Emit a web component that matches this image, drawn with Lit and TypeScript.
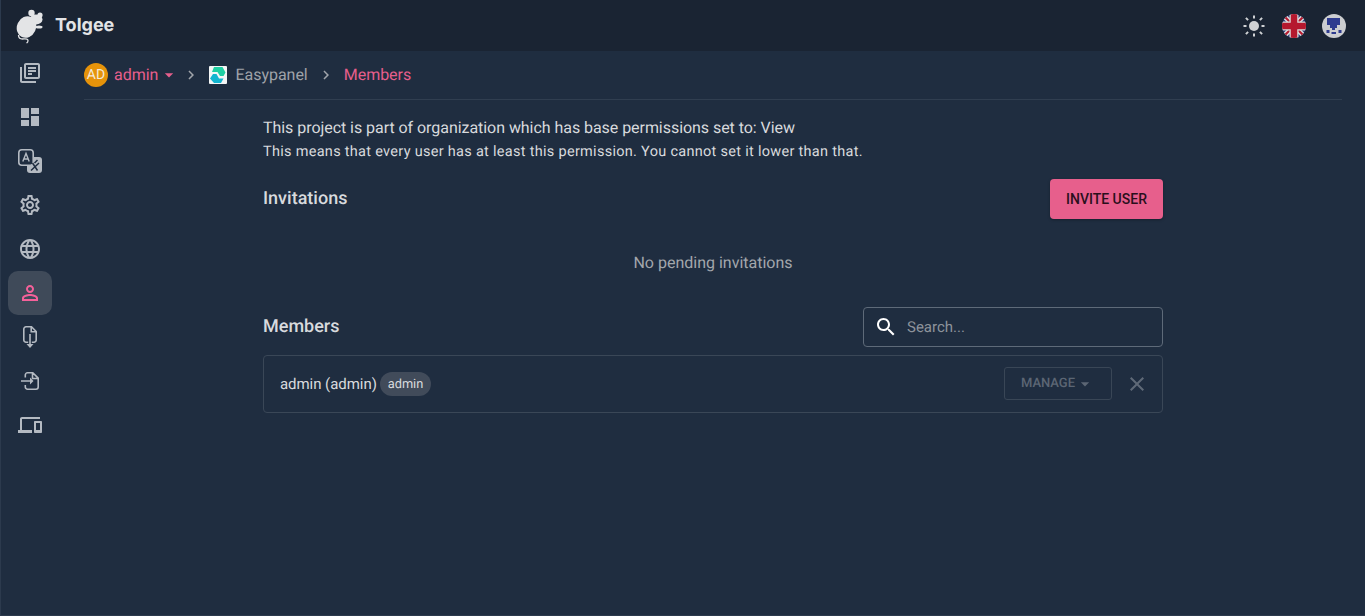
import { LitElement, html, css, svg } from 'lit';
import { customElement } from 'lit/decorators.js';

const navIcons = [
  svg`<path d="M4 6H2v14c0 1.100.9 2 2 2h14v-2H4V6zm16-4H8c-1.100 0-2 .9-2 2v12c0 1.100.9 2 2 2h12c1.100 0 2-.9 2-2V4c0-1.100-.9-2-2-2zm0 14H8V4h12v12zM10 9h8v2h-8zm0 3h4v2h-4zm0-6h8v2h-8z"/>`,
  svg`<path d="M3 13h8V3H3v10zm0 8h8v-6H3v6zm10 0h8V11h-8v10zm0-18v6h8V3h-8z"/>`,
  svg`<rect x="9" y="8" width="15" height="16" rx="3"/>
    <rect x=".8" y=".8" width="14.400" height="15.400" rx="3" fill="#1f2d40" stroke="currentColor" stroke-width="1.600"/>
    <path d="M4.800 12.500 8 4.500l3.200 8M5.900 10h4.200" fill="none" stroke="currentColor" stroke-width="1.400"/>
    <path d="M13 21.500l8-7.500M14.500 14l5 7.500M16.500 14l3-3" fill="none" stroke="#1f2d40" stroke-width="1.500"/>`,
  svg`<path d="M19.430 12.980c.04-.32.07-.64.07-.98 0-.34-.03-.66-.07-.98l2.110-1.650c.19-.15.24-.42.12-.64l-2-3.460c-.09-.16-.26-.25-.44-.25-.06 0-.12.01-.17.03l-2.490 1c-.52-.4-1.080-.73-1.690-.98l-.38-2.650C14.460 2.180 14.250 2 14 2h-4c-.25 0-.46.18-.49.420l-.38 2.650c-.61.25-1.170.59-1.690.98l-2.490-1c-.06-.02-.12-.03-.18-.03-.17 0-.34.09-.43.25l-2 3.460c-.13.220-.07.490.12.640l2.110 1.650c-.04.320-.07.650-.07.980 0 .330.030.660.070.980l-2.110 1.650c-.19.150-.24.42-.12.640l2 3.460c.09.160.26.250.44.250.060 0 .12-.01.17-.03l2.490-1c.52.400 1.080.730 1.690.980l.38 2.650c.03.240.24.420.49.420h4c.25 0 .46-.18.49-.42l.38-2.650c.61-.25 1.170-.59 1.690-.98l2.490 1c.06.020.12.030.18.030.17 0 .34-.09.43-.25l2-3.460c.12-.22.070-.49-.12-.64l-2.110-1.650zm-1.980-1.710c.04.310.050.520.050.730 0 .210-.02.430-.05.730l-.14 1.130.89.700 1.080.840-.7 1.210-1.270-.51-1.040-.42-.9.680c-.43.320-.84.560-1.250.730l-1.060.430-.16 1.130-.2 1.350h-1.400l-.19-1.350-.16-1.130-1.060-.43c-.43-.18-.83-.41-1.230-.71l-.91-.7-1.060.430-1.270.510-.7-1.210 1.080-.840.890-.7-.14-1.130c-.03-.31-.05-.54-.05-.74s.020-.43.050-.73l.14-1.130-.89-.7-1.080-.840.7-1.210 1.270.510 1.040.420.9-.68c.43-.32.840-.56 1.250-.73l1.060-.43.16-1.130.2-1.350h1.390l.19 1.350.16 1.130 1.060.43c.43.180.83.410 1.230.71l.91.7 1.060-.43 1.270-.51.7 1.210-1.070.850-.89.7.140 1.130zM12 8c-2.210 0-4 1.790-4 4s1.790 4 4 4 4-1.790 4-4-1.790-4-4-4zm0 6c-1.100 0-2-.9-2-2s.9-2 2-2 2 .9 2 2-.9 2-2 2z"/>`,
  svg`<path d="M11.990 2C6.470 2 2 6.480 2 12s4.470 10 9.990 10C17.520 22 22 17.520 22 12S17.520 2 11.990 2zm6.930 6h-2.950c-.32-1.250-.78-2.450-1.380-3.560 1.840.630 3.370 1.910 4.330 3.560zM12 4.040c.83 1.200 1.480 2.530 1.910 3.960h-3.820c.43-1.430 1.080-2.760 1.910-3.960zM4.260 14C4.100 13.360 4 12.690 4 12s.1-1.360.26-2h3.380c-.08.660-.14 1.320-.14 2s.06 1.340.14 2H4.260zm.82 2h2.950c.32 1.250.78 2.450 1.380 3.560-1.840-.63-3.370-1.900-4.330-3.560zm2.950-8H5.080c.96-1.660 2.490-2.930 4.330-3.560C8.810 5.550 8.350 6.750 8.030 8zM12 19.960c-.83-1.200-1.480-2.530-1.910-3.960h3.820c-.43 1.430-1.080 2.760-1.910 3.960zM14.340 14H9.660c-.09-.66-.16-1.320-.16-2s.07-1.350.16-2h4.680c.09.650.16 1.320.16 2s-.07 1.340-.16 2zm.25 5.560c.6-1.110 1.060-2.310 1.380-3.560h2.950c-.96 1.650-2.490 2.930-4.330 3.560zM16.360 14c.08-.66.14-1.320.14-2s-.06-1.340-.14-2h3.380c.16.640.26 1.310.26 2s-.1 1.360-.26 2h-3.380z"/>`,
  svg`<path d="M12 6c1.100 0 2 .9 2 2s-.9 2-2 2-2-.9-2-2 .9-2 2-2m0 9c2.700 0 5.800 1.290 6 2.010V18H6v-.99C6.200 16.290 9.300 15 12 15m0-11C9.790 4 8 5.790 8 8s1.790 4 4 4 4-1.790 4-4-1.790-4-4-4zm0 9c-2.670 0-8 1.340-8 4v3h16v-3c0-2.660-5.330-4-8-4z"/>`,
  svg`<path d="M10.200 17.200H8a2.200 2.200 0 0 1-2.200-2.200V4A2.200 2.200 0 0 1 8 1.800h5.500l4.700 4.700V15a2.200 2.200 0 0 1-2.200 2.200h-2.200M13.200 2v4.800h4.800" fill="none" stroke="currentColor" stroke-width="1.600"/>
    <path d="M11.200 9h1.600v10h2.700L12 23l-3.500-4h2.700z"/>`,
  svg`<path d="M7.300 8.500V6A2.200 2.200 0 0 1 9.500 3.800h5.300l5.400 5.400V18a2.200 2.200 0 0 1-2.200 2.200H9.500A2.200 2.200 0 0 1 7.300 18v-2M14.500 4v5.500h5.500" fill="none" stroke="currentColor" stroke-width="1.600"/>
    <path d="M3 11.300h9v-2.800l3.500 3.500-3.500 3.500v-2.800H3z"/>`,
  svg`<path d="M4 6h18V4H4c-1.100 0-2 .9-2 2v11H0v3h14v-3H4V6zm19 2h-6c-.55 0-1 .45-1 1v10c0 .55.450 1 1 1h6c.55 0 1-.45 1-1V9c0-.55-.45-1-1-1zm-1 9h-4v-7h4v7z"/>`,
];

@customElement('app-root')
export class AppRoot extends LitElement {
  static styles = css`
    :host {
      display: block;
      height: 616px;
      box-sizing: border-box;
      overflow: hidden;
      background: #1f2d40;
      color: #d8dadd;
      font-family: Roboto, 'Liberation Sans', sans-serif;
      font-size: 16px;
      text-rendering: geometricPrecision;
      border-left: 1px solid #2c3a4d;
      border-bottom: 1px solid #2c3a4d;
    }

    .topbar {
      height: 51px;
      background: #1a2433;
      display: flex;
      align-items: center;
      padding: 0 19px 0 15px;
    }

    .logo {
      display: flex;
      align-items: center;
      gap: 8px;
      color: #e3e4e6;
    }

    .logo svg { display: block; }

    .logo-name {
      font-family: Inter, sans-serif;
      font-size: 18px;
      font-weight: 700;
    }

    .top-actions {
      margin-left: auto;
      display: flex;
      align-items: center;
      gap: 16px;
    }

    .top-actions svg { display: block; }

    .body {
      display: flex;
    }

    .sidebar {
      width: 59px;
      box-sizing: border-box;
      flex: none;
      display: flex;
      flex-direction: column;
      padding: 0 0 0 7px;
    }

    .nav-item {
      width: 44px;
      height: 44px;
      display: flex;
      align-items: center;
      justify-content: center;
      border-radius: 10px;
      fill: #b4bac2;
      color: #b4bac2;
    }

    .nav-item.active {
      background: #3f4a59;
      fill: #f5619a;
      color: #f5619a;
    }

    .nav-item svg { display: block; }

    .main {
      flex: 1;
      padding: 0 23px 0 24px;
      min-width: 0;
    }

    .crumbs {
      height: 48px;
      display: flex;
      align-items: center;
      border-bottom: 1px solid #303e50;
      color: #9fa3a9;
    }

    .crumb-text {
      padding-bottom: 2px;
      letter-spacing: -0.02px;
    }

    .avatar {
      width: 24px;
      height: 24px;
      border-radius: 50%;
      background: #e6930a;
      color: #f3ead9;
      font-size: 14px;
      display: flex;
      align-items: center;
      justify-content: center;
      margin-right: 6px;
    }

    .link { color: #e75f8c; }

    .caret {
      fill: #e75f8c;
      display: block;
      margin-left: 1px;
    }

    .sep {
      fill: #a0a4aa;
      display: block;
      margin: 0 9px;
    }

    .sep.first { margin-left: 3px; }

    .project-logo { display: block; margin-right: 8px; }

    .content {
      width: 900px;
      margin: 0 auto;
    }

    .note-1 {
      margin-top: 18px;
      line-height: 19px;
      letter-spacing: -0.05px;
    }

    .note-2 {
      margin-top: 6px;
      font-size: 14.500px;
      line-height: 17px;
      letter-spacing: 0.29px;
    }

    .section-head {
      display: flex;
      align-items: center;
      justify-content: space-between;
    }

    .section-head h2 {
      margin: 0;
      padding-bottom: 2px;
      font-size: 18px;
      font-weight: 500;
      color: #d8dadd;
    }

    .invites { margin-top: 19px; height: 40px; }

    .invite-btn {
      width: 113px;
      height: 40px;
      background: #e75f8c;
      color: #2a0f1c;
      border: 0;
      border-radius: 4px;
      font: 500 14px Roboto, sans-serif;
      padding: 0;
      box-shadow: 0 1px 3px rgba(0, 0, 0, 0.3);
    }

    .empty {
      margin-top: 32px;
      text-align: center;
      color: #a3a7ac;
      line-height: 24px;
    }

    .members-head { margin-top: 32px; height: 40px; }

    .search {
      width: 300px;
      height: 40px;
      box-sizing: border-box;
      border: 1px solid #5e6a79;
      border-radius: 4px;
      display: flex;
      align-items: center;
      padding-left: 10px;
      gap: 9px;
      color: #8d939b;
      font-size: 15px;
    }

    .search svg { fill: #fff; display: block; }

    .row {
      margin-top: 8px;
      height: 58px;
      box-sizing: border-box;
      border: 1px solid #3a4757;
      border-radius: 4px;
      display: flex;
      align-items: center;
      padding: 0 13px 0 16px;
      font-size: 15px;
      letter-spacing: -0.05px;
    }

    .row-name { padding-bottom: 1px; }

    .chip {
      margin-left: 3px;
      height: 24px;
      padding: 0 8px;
      border-radius: 12px;
      background: #414b5a;
      font-size: 12.800px;
      display: flex;
      align-items: center;
    }

    .manage {
      margin-left: auto;
      margin-top: -1px;
      width: 108px;
      height: 33px;
      box-sizing: border-box;
      border: 1px solid #394656;
      border-radius: 3px;
      display: flex;
      align-items: center;
      justify-content: center;
      color: #5c6674;
      font-size: 13px;
      font-weight: 500;
    }

    .manage svg { fill: #5c6674; display: block; }

    .remove {
      display: block;
      margin-left: 13px;
      fill: #5f6977;
    }
  `;

  render() {
    return html`
      <div class="topbar">
        <div class="logo">
          <svg width="31" height="38" viewBox="16 6 31 38" fill="currentColor">
            <ellipse cx="26.500" cy="26" rx="9.500" ry="11" transform="rotate(25 26.500 26)"/>
            <ellipse cx="36" cy="18.500" rx="6.500" ry="5"/>
            <circle cx="31.500" cy="12" r="3.200"/>
            <circle cx="40" cy="14" r="2.600"/>
            <ellipse cx="39" cy="26" rx="3.500" ry="1.500"/>
            <path d="M18.500 34c0 3 1 4 4 4s5.500-.5 5.500 1.500-.5 2-1.500 2.500" fill="none" stroke="currentColor" stroke-width="1.300"/>
          </svg>
          <span class="logo-name">Tolgee</span>
        </div>
        <div class="top-actions">
          <svg width="24" height="24" viewBox="0 0 24 24" fill="#d0d2d5">
            <circle cx="12" cy="12" r="5"/>
            <path d="M11 1.500h2v3h-2zM11 19.500h2v3h-2zM1.500 11h3v2h-3zM19.500 11h3v2h-3zM4.600 3.200l2.200 2.200-1.400 1.400-2.200-2.200zM18.600 17.200l2.200 2.200-1.400 1.400-2.200-2.200zM19.400 3.200l1.400 1.400-2.200 2.200-1.400-1.400zM5.400 17.200l1.400 1.400-2.200 2.200-1.400-1.400z"/>
          </svg>
          <svg width="24" height="24" viewBox="0 0 24 24">
            <defs><clipPath id="flag"><circle cx="12" cy="12" r="12"/></clipPath></defs>
            <g clip-path="url(#flag)">
              <rect width="24" height="24" fill="#2b3a78"/>
              <path d="M0 0L24 24M24 0L0 24" stroke="#dcdcdc" stroke-width="5"/>
              <path d="M0 0L24 24M24 0L0 24" stroke="#b5182e" stroke-width="2"/>
              <path d="M12 0V24M0 12H24" stroke="#dcdcdc" stroke-width="9"/>
              <path d="M12 0V24M0 12H24" stroke="#b5182e" stroke-width="6.500"/>
            </g>
          </svg>
          <svg width="24" height="24" viewBox="0 0 24 24">
            <circle cx="12" cy="12" r="12" fill="#cccdd0"/>
            <path d="M5 4h13v7h-3v3h-2v2h-3v-2H8v-3H5z" fill="#2e3b8f"/>
            <path d="M4.500 16h3v3h-3zM16.500 16h3v3h-3zM9.500 18h4.500v2H9.500z" fill="#2e3b8f"/>
          </svg>
        </div>
      </div>
      <div class="body">
        <nav class="sidebar">
          ${navIcons.map(
            (icon, i) => html`
              <div class="nav-item ${i === 5 ? 'active' : ''}">
                <svg width="24" height="24" viewBox="0 0 24 24">${icon}</svg>
              </div>
            `,
          )}
        </nav>
        <div class="main">
          <div class="crumbs">
            <div class="avatar">AD</div>
            <span class="crumb-text link">admin</span>
            <svg class="caret" width="20" height="20" viewBox="0 0 24 24"><path d="M7 10l5 5 5-5z"/></svg>
            <svg class="sep first" width="18" height="18" viewBox="0 0 24 24"><path d="M10 6L8.590 7.410 13.170 12l-4.580 4.590L10 18l6-6z"/></svg>
            <svg class="project-logo" width="18" height="18" viewBox="0 0 18 18">
              <rect width="18" height="18" rx="1" fill="#f4f6f6"/>
              <path d="M5 1h8.500l3 5.500-2 3.500h-3.500L8.500 6H3z" fill="#1fcfa3"/>
              <path d="M1 12.500 4 8h3.500l2.500 4.500h4.500L12 17H5z" fill="#12b5cf"/>
            </svg>
            <span class="crumb-text">Easypanel</span>
            <svg class="sep" width="18" height="18" viewBox="0 0 24 24"><path d="M10 6L8.590 7.410 13.170 12l-4.580 4.590L10 18l6-6z"/></svg>
            <span class="crumb-text link">Members</span>
          </div>
          <div class="content">
            <div class="note-1">This project is part of organization which has base permissions set to: View</div>
            <div class="note-2">This means that every user has at least this permission. You cannot set it lower than that.</div>
            <div class="section-head invites">
              <h2>Invitations</h2>
              <button class="invite-btn">INVITE USER</button>
            </div>
            <div class="empty">No pending invitations</div>
            <div class="section-head members-head">
              <h2>Members</h2>
              <div class="search">
                <svg width="24" height="24" viewBox="0 0 24 24"><path d="M15.500 14h-.79l-.28-.27C15.410 12.590 16 11.110 16 9.500 16 5.910 13.090 3 9.500 3S3 5.910 3 9.500 5.910 16 9.500 16c1.610 0 3.090-.59 4.230-1.570l.27.28v.79l5 4.990L20.490 19l-4.990-5zm-6 0C7.010 14 5 11.990 5 9.500S7.010 5 9.500 5 14 7.010 14 9.500 11.990 14 9.500 14z"/></svg>
                <span>Search...</span>
              </div>
            </div>
            <div class="row">
              <span class="row-name">admin (admin)</span>
              <span class="chip">admin</span>
              <div class="manage">
                <span>MANAGE</span>
                <svg width="20" height="20" viewBox="0 0 24 24"><path d="M7 10l5 5 5-5z"/></svg>
              </div>
              <svg class="remove" width="24" height="24" viewBox="0 0 24 24"><path d="M19 6.410L17.590 5 12 10.590 6.410 5 5 6.410 10.590 12 5 17.590 6.410 19 12 13.410 17.590 19 19 17.590 13.410 12z"/></svg>
            </div>
          </div>
        </div>
      </div>
    `;
  }
}
